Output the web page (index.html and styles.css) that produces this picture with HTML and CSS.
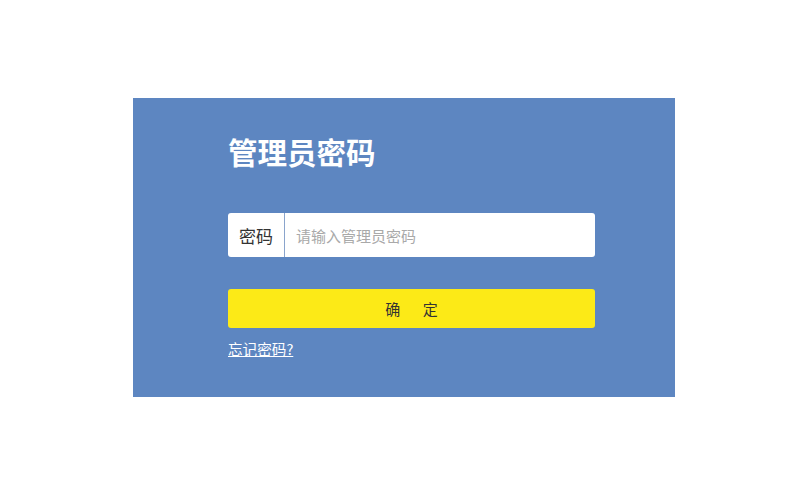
FILE: index.html
```html
<!DOCTYPE html>
<html lang="zh-CN">
<head>
<meta charset="utf-8">
<title>管理员密码</title>
<link rel="stylesheet" href="styles.css">
</head>
<body>
<div class="panel">
  <div class="content">
    <h1 class="title">管理员密码</h1>
    <div class="field">
      <span class="label">密码</span>
      <input class="input" type="password" placeholder="请输入管理员密码">
    </div>
    <button class="btn" type="button">确&emsp;&ensp;定</button>
    <a class="forgot" href="#">忘记密码?</a>
  </div>
</div>
</body>
</html>
```
FILE: styles.css
```css
html, body {
  margin: 0;
  padding: 0;
  background: #ffffff;
}
body {
  font-family: "Noto Sans CJK SC", "Noto Sans", sans-serif;
}
.panel {
  margin: 98px 0 0 133px;
  width: 542px;
  height: 299px;
  background: #5d86c1;
  box-sizing: border-box;
  padding: 32px 80px 0 95px;
}
.content {
  display: flex;
  flex-direction: column;
  width: 367px;
}
.title {
  margin: 0;
  font-size: 29.5px;
  line-height: 42px;
  font-weight: 700;
  color: #ffffff;
}
.field {
  margin-top: 41px;
  display: flex;
  height: 44px;
  background: #ffffff;
  border-radius: 3px;
  overflow: hidden;
}
.label {
  width: 56px;
  flex: none;
  display: flex;
  align-items: center;
  justify-content: center;
  font-size: 17px;
  color: #333333;
  border-right: 1px solid #8aa4cc;
}
.input {
  flex: 1;
  border: none;
  outline: none;
  padding: 0 0 0 11px;
  font-family: inherit;
  font-size: 15px;
  color: #333;
  background: transparent;
}
.input::placeholder {
  color: #a9a9a9;
}
.btn {
  margin-top: 32px;
  height: 39px;
  border: none;
  border-radius: 3px;
  background: #fcea17;
  font-family: inherit;
  font-size: 15px;
  color: #333333;
  padding: 0;
}
.forgot {
  margin-top: 11px;
  align-self: flex-start;
  font-size: 14.6px;
  line-height: 20px;
  color: #ffffff;
  text-decoration: underline;
}
```
